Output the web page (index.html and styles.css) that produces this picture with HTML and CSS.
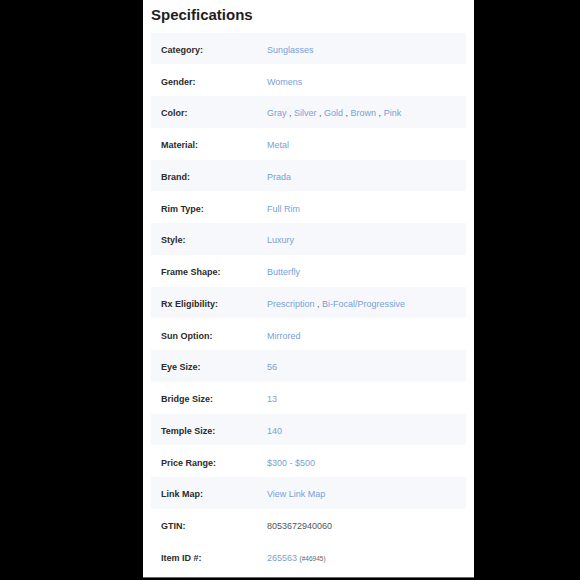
FILE: index.html
```html
<!DOCTYPE html>
<html>
<head>
<meta charset="utf-8">
<link rel="stylesheet" href="styles.css">
</head>
<body>
<div class="panel">
  <h2 class="title">Specifications</h2>
  <div class="specs">
    <div class="row alt"><div class="label">Category:</div><div class="value"><a>Sunglasses</a></div></div>
    <div class="row"><div class="label">Gender:</div><div class="value"><a>Womens</a></div></div>
    <div class="row alt"><div class="label">Color:</div><div class="value"><a>Gray</a> , <a>Silver</a> , <a>Gold</a> , <a>Brown</a> , <a>Pink</a></div></div>
    <div class="row"><div class="label">Material:</div><div class="value"><a>Metal</a></div></div>
    <div class="row alt"><div class="label">Brand:</div><div class="value"><a>Prada</a></div></div>
    <div class="row"><div class="label">Rim Type:</div><div class="value"><a>Full Rim</a></div></div>
    <div class="row alt"><div class="label">Style:</div><div class="value"><a>Luxury</a></div></div>
    <div class="row"><div class="label">Frame Shape:</div><div class="value"><a>Butterfly</a></div></div>
    <div class="row alt"><div class="label">Rx Eligibility:</div><div class="value"><a>Prescription</a> , <a>Bi-Focal/Progressive</a></div></div>
    <div class="row"><div class="label">Sun Option:</div><div class="value"><a>Mirrored</a></div></div>
    <div class="row alt"><div class="label">Eye Size:</div><div class="value"><a>56</a></div></div>
    <div class="row"><div class="label">Bridge Size:</div><div class="value"><a>13</a></div></div>
    <div class="row alt"><div class="label">Temple Size:</div><div class="value"><a>140</a></div></div>
    <div class="row"><div class="label">Price Range:</div><div class="value"><a>$300 - $500</a></div></div>
    <div class="row alt"><div class="label">Link Map:</div><div class="value"><a>View Link Map</a></div></div>
    <div class="row"><div class="label">GTIN:</div><div class="value plain">8053672940060</div></div>
    <div class="row"><div class="label">Item ID #:</div><div class="value"><a>265563</a> <span class="sub">(#46945)</span></div></div>
  </div>
</div>
</body>
</html>
```

FILE: styles.css
```css
html, body {
  margin: 0;
  padding: 0;
  background: #000;
  height: 580px;
  overflow: hidden;
}
body {
  display: flex;
  justify-content: flex-start;
  font-family: "Liberation Sans", Arial, sans-serif;
}
.panel {
  margin-left: 143px;
  width: 331px;
  height: 578px;
  background: #fff;
  border-bottom: 1px solid #666;
  box-sizing: border-box;
  padding: 0 8px;
}
.title {
  margin: 0;
  height: 32.5px;
  box-sizing: border-box;
  padding-top: 6px;
  font-size: 15px;
  font-weight: bold;
  color: #1e1e1e;
  line-height: 18px;
}
.specs {
  display: flex;
  flex-direction: column;
}
.row {
  display: flex;
  align-items: center;
  height: 31.75px;
  box-sizing: border-box;
  padding: 3px 0 0 10px;
  font-size: 9px;
}
.row.alt {
  background: #f6f8fb;
}
.label {
  width: 106px;
  font-weight: bold;
  color: #2b2b2b;
}
.value {
  color: #555;
}
.value a {
  color: #7a9fd6;
}
.value.plain {
  color: #555;
}
.sub {
  font-size: 6.5px;
  color: #666;
}
```
